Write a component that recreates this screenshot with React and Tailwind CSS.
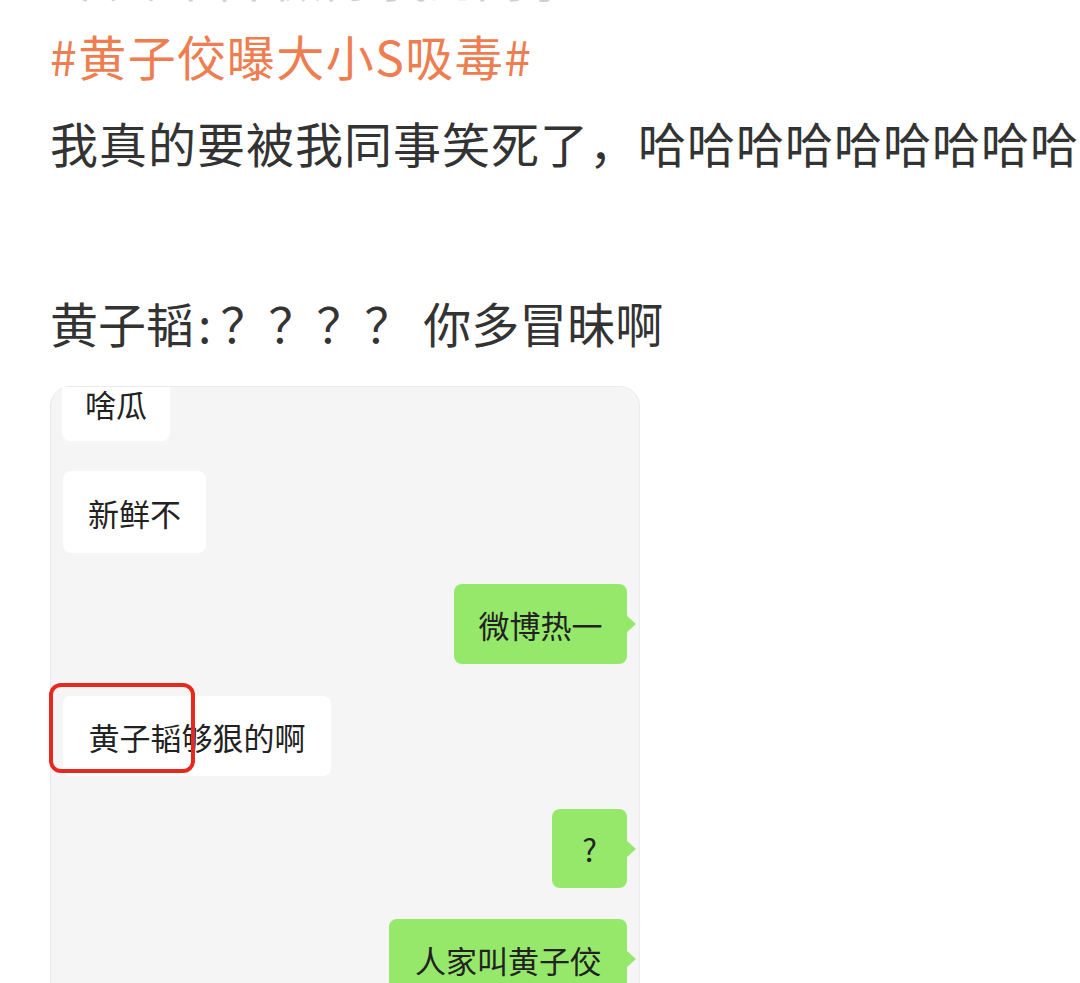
import React from "react";

const cjk = { fontFamily: '"Noto Sans CJK SC", "Noto Sans", sans-serif' };

function Bubble({ side, w, h = 80, children, className = "" }) {
  const green = side === "right";
  return (
    <div className={`flex ${green ? "justify-end pr-[12px]" : "justify-start pl-[12px]"} ${className}`}>
      <div
        className={`relative flex items-center justify-center rounded-[8px] ${green ? "bg-[#95e86a]" : "bg-white"}`}
        style={{ width: w, height: h }}
      >
        <span className="text-[31px] leading-[31px] text-[#222222]">{children}</span>
        {green && (
          <span className="absolute right-[-9px] top-1/2 -translate-y-1/2 h-0 w-0 border-y-[9px] border-l-[10px] border-y-transparent border-l-[#95e86a]" />
        )}
      </div>
    </div>
  );
}

export default function App() {
  return (
    <div className="w-[1080px] h-[983px] overflow-hidden bg-white pl-[50px]" style={cjk}>
      <div className="mt-[-48px] h-[48px] whitespace-nowrap pl-[10px] text-[48px] leading-[48px] text-[#cfcfcf]">
        今天 来自 微博 我的同事
      </div>
      <div className="mt-[31px] h-[48px] whitespace-nowrap text-[48px] leading-[48px] tracking-[1.5px] text-[#ee7d50]">
        #黄子佼曝大小S吸毒#
      </div>
      <div className="mt-[39px] h-[48px] whitespace-nowrap text-[48px] leading-[48px] tracking-[1px] text-[#333333]">
        我真的要被我同事笑死了，哈哈哈哈哈哈哈哈哈哈哈哈
      </div>
      <div className="mt-[132px] h-[48px] whitespace-nowrap text-[48px] leading-[48px] text-[#333333]">
        黄子韬<span className="ml-[4px] mr-[9px]">:</span>？？？？ 你多冒昧啊
      </div>
      <div className="relative mt-[40px] w-[590px] h-[700px] rounded-t-[20px] border border-[#ebebeb] bg-[#f5f5f5]">
        <div className="pl-[11px]">
          <div className="flex h-[54px] w-[108px] items-start justify-center rounded-b-[8px] bg-white pt-[1px]">
            <span className="text-[31px] leading-[31px] text-[#222222]">啥瓜</span>
          </div>
        </div>
        <Bubble side="left" w={143} h={82} className="mt-[30px]">新鲜不</Bubble>
        <Bubble side="right" w={173} className="mt-[31px]">微博热一</Bubble>
        <Bubble side="left" w={268} className="mt-[32px]">黄子韬够狠的啊</Bubble>
        <Bubble side="right" w={75} h={79} className="mt-[33px]">?</Bubble>
        <Bubble side="right" w={238} className="mt-[31px]">人家叫黄子佼</Bubble>
        <div className="absolute left-[-2px] top-[296px] h-[90px] w-[146px] rounded-[12px] border-[4px] border-[#e8281c]" />
      </div>
    </div>
  );
}
